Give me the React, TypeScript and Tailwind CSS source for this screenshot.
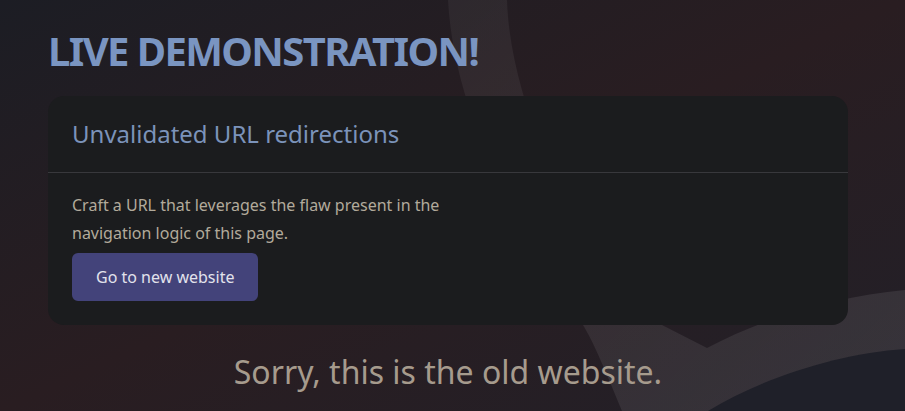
import React from 'react';

const font = { fontFamily: '"Noto Sans", "Open Sans", sans-serif' };

const Backdrop: React.FC = () => (
  <svg
    className="pointer-events-none absolute inset-0 h-full w-full"
    viewBox="0 0 905 411"
    preserveAspectRatio="none"
    aria-hidden="true"
  >
    <defs>
      <linearGradient id="band" x1="0" y1="0" x2="1" y2="1">
        <stop offset="0" stopColor="#ffffff" stopOpacity="0.05" />
        <stop offset="1" stopColor="#ffffff" stopOpacity="0.09" />
      </linearGradient>
    </defs>
    <path
      d="M448 0 L507 0 C510 100 570 240 660 324 L707 348 C770 315 840 296 905 290 L905 411 L622 411 C605 370 595 345 583 325 C520 230 455 120 448 0 Z"
      fill="url(#band)"
    />
    <path d="M708 411 C762 378 840 353 905 349 L905 411 Z" fill="#1f2029" />
  </svg>
);

const App: React.FC = () => {
  return (
    <div
      className="relative min-h-screen w-full overflow-hidden bg-linear-to-br from-[#1c1d24] via-[#291d21] to-[#222028]"
      style={font}
    >
      <Backdrop />
      <div className="relative z-10 w-[800px] ml-12 pt-[27px]">
        <h1 className="text-[40px] leading-[48px] font-bold tracking-[-1.6px] text-[#7a95c1] mb-[21px]">
          LIVE DEMONSTRATION!
        </h1>

        <div className="rounded-2xl bg-[#1b1c1e]">
          <div className="px-6 py-5 border-b border-[#38383c]">
            <h2 className="text-2xl leading-9 text-[#7b93ba]">Unvalidated URL redirections</h2>
          </div>
          <div className="px-6 pt-[18px] pb-6">
            <p className="max-w-[420px] text-base leading-7 text-[#b2aa9b]">
              Craft a URL that leverages the flaw present in the navigation logic of this page.
            </p>
            <button
              type="button"
              className="mt-[6px] rounded-md bg-[#43437a] px-6 py-3 text-base leading-6 text-[#e2e2ec]"
            >
              Go to new website
            </button>
          </div>
        </div>

        <p className="mt-[23px] text-center text-[32px] leading-[48px] text-[#a69b8d]">
          Sorry, this is the old website.
        </p>
      </div>
    </div>
  );
};

export default App;
